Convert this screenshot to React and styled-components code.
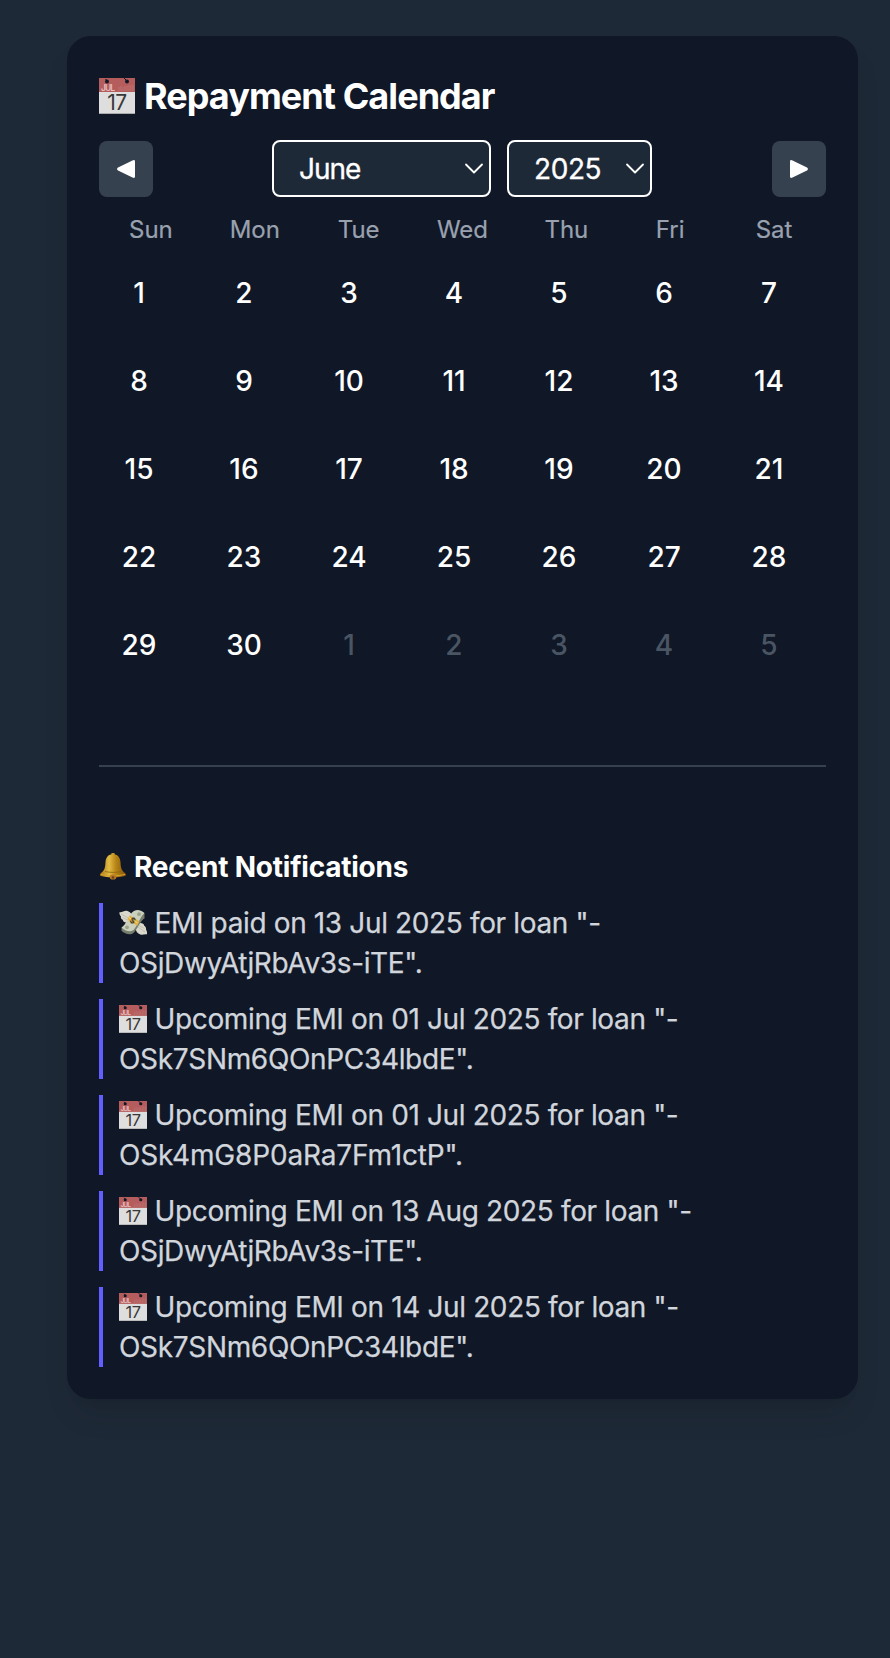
import React from "react";
import styled, { createGlobalStyle } from "styled-components";

const GlobalStyle = createGlobalStyle`
  *, *::before, *::after { box-sizing: border-box; }
  body {
    margin: 0;
    background: #1e2937;
    color: #fff;
    font-family: Inter, "Liberation Sans", sans-serif;
    font-size: 28px;
    line-height: 40px;
    -webkit-font-smoothing: antialiased;
  }
`;

const Page = styled.main`
  min-height: 1658px;
  padding: 36px 32px 0 67px;
`;

const Card = styled.section`
  height: 1363px;
  padding: 32px;
  border-radius: 24px;
  background: #101726;
  box-shadow: 0 20px 30px -6px rgba(0, 0, 0, 0.1), 0 8px 12px -8px rgba(0, 0, 0, 0.1);
`;

const Title = styled.h2`
  display: flex;
  align-items: center;
  gap: 9px;
  height: 56px;
  margin: 0 0 16px;
  font-size: 36px;
  line-height: 56px;
  font-weight: 700;
  letter-spacing: -0.94px;
`;

const Controls = styled.div`
  display: flex;
  justify-content: space-between;
  align-items: center;
  height: 57px;
  margin-bottom: 17px;
`;

const NavButton = styled.button`
  display: grid;
  place-items: center;
  width: 54px;
  height: 56px;
  padding: 0;
  border: 0;
  border-radius: 8px;
  background: #364150;
  color: #fff;
`;

const Selects = styled.div`
  display: flex;
  gap: 16px;
  margin-right: 1px;
`;

const SelectBox = styled.div`
  display: flex;
  justify-content: space-between;
  align-items: center;
  width: ${(p) => p.$width}px;
  height: 57px;
  padding: 0 5px 0 25px;
  border: 2px solid #fff;
  border-radius: 8px;
  background: #1e2937;
  letter-spacing: ${(p) => p.$spacing || 0}px;
  -webkit-text-stroke: 0.3px currentColor;
`;

const Weekdays = styled.div`
  display: grid;
  grid-template-columns: repeat(7, 1fr);
  margin-bottom: 7px;
  color: #99a1af;
  font-size: 24px;
  line-height: 32px;
  text-align: center;
  -webkit-text-stroke: 0.2px currentColor;
`;

const Days = styled.div`
  display: grid;
  grid-template-columns: repeat(7, 1fr);
  gap: 8px;
`;

const Day = styled.div`
  width: 80px;
  height: 80px;
  padding-top: 20px;
  text-align: center;
  font-weight: 500;
  color: ${(p) => (p.$muted ? "#4a5564" : "#fff")};
`;

const Divider = styled.hr`
  height: 2px;
  margin: 80px 0 80px;
  border: 0;
  background: #364150;
`;

const Subtitle = styled.h3`
  display: flex;
  align-items: center;
  gap: 7px;
  height: 40px;
  margin: 0 0 16px;
  font-size: 28px;
  font-weight: 650;
  letter-spacing: -0.22px;
`;

const List = styled.ul`
  display: flex;
  flex-direction: column;
  gap: 16px;
  margin: 0;
  padding: 0;
  list-style: none;
`;

const Item = styled.li`
  height: 80px;
  padding-left: 16px;
  border-left: 4px solid #615fff;
  color: #d1d5dc;
  -webkit-text-stroke: 0.25px currentColor;
`;

const Line = styled.div`
  display: flex;
  align-items: center;
  gap: 7.5px;
  white-space: nowrap;
  letter-spacing: ${(p) => p.$spacing || "-0.36"}px;
`;

const CalendarIcon = ({ size }) => (
  <svg width={size} height={size} viewBox="0 0 36 36" style={{ flex: "none" }}>
    <rect width="36" height="36" fill="#dedede" />
    <rect width="36" height="14" fill="#b55d5d" />
    <path d="M0 35.5h36" stroke="#aaa" />
    <path d="M20 9v4M22 8v5M24 9v4M26 8v5M28 8v5M30 7v6M32 7v6M34 7v6" stroke="#c07878" strokeWidth=".7" />
    <path d="M6.500 1l1.500 2M25 0l3 3" stroke="#101726" strokeWidth="1" />
    <circle cx="8" cy="3.500" r="2" fill="#101726" />
    <circle cx="28" cy="3.500" r="2" fill="#101726" />
    <text x="2" y="12.800" fill="#e5bdbd" fontSize="8.500" fontWeight="600" textLength="13">JUL</text>
    <text x="18" y="32" textAnchor="middle" fill="#383838" fontSize="21" fontWeight="400" letterSpacing="-.5">17</text>
  </svg>
);

const BellIcon = () => (
  <svg width="28" height="28" viewBox="0 0 28 28" style={{ flex: "none" }}>
    <defs>
      <linearGradient id="bell" x1="0" x2="1">
        <stop offset="0" stopColor="#a87510" />
        <stop offset=".35" stopColor="#e3bc45" />
        <stop offset=".6" stopColor="#b98617" />
        <stop offset="1" stopColor="#805208" />
      </linearGradient>
    </defs>
    <g transform="translate(0 -1)">
      <circle cx="14" cy="2.500" r="1.800" fill="#c39522" />
      <path d="M14 2.200c-5 0-7.200 3.400-7.500 8-.3 6.800-1.500 8.500-5 11.200-.8.7-.7 2.200.4 2.600 6 1.800 18.200 1.800 24.200 0 1.100-.4 1.200-1.900.4-2.600-3.500-2.700-4.700-4.400-5-11.200-.3-4.600-2.500-8-7.500-8z" fill="url(#bell)" />
      <path d="M2 22.300c7 2 17 2 24 0" stroke="#d9a32b" fill="none" />
      <path d="M6 19.500c5 1.200 11 1.200 16 0" stroke="#8d620d" strokeWidth=".8" fill="none" />
      <ellipse cx="14" cy="25" rx="3.300" ry="2.600" fill="#b77925" />
      <circle cx="14" cy="25.500" r="1.300" fill="#71401a" />
    </g>
  </svg>
);

const MoneyIcon = () => (
  <svg width="28" height="28" viewBox="0 0 28 28" style={{ flex: "none" }}>
    <path d="M.5 3c2 1 5-2 8-1 3 .8 5 3.500 4.500 6.700L10 13C6 14.500 4 12.700 3.700 10.800 1.800 10 1.700 8.500 2 7.500.8 6.500.2 4.500.5 3z" fill="#d9d8cb" />
    <path d="M27.800 25.500c-1.800-.8-3.800 1-6.500.1-3-1.200-4.800-3.700-4.500-6.400l3-5c3-.6 5.200.5 5.400 2.500 1.600.8 2.200 2.800 1.800 4 1 1 1.400 3.300.8 4.800z" fill="#d9d8cb" />
    <path d="M2 5l7 4M3.500 8.500l5 2.500M19 18l7 5M20 16.500l5.500 3" stroke="#b5b4a6" strokeWidth=".7" />
    <path d="M13 5.500C16 1.500 21 .7 25.500 4.500v5C22 11 19.500 18 15 23.500c-3.500 3.500-9 1.500-12.500-1.800v-3C7 17 9 9.500 13 5.500z" fill="#777d6c" />
    <path d="M13 3.500C16 0 21 0 25.500 4c-4 3-6.500 12-11 17-3.500 2.800-8.500 1-12-2.500C7 16 9 8 13 3.500z" fill="#cbd0bd" />
    <circle cx="20" cy="5.200" r="1.900" fill="#9aa48d" />
    <circle cx="8" cy="18.300" r="1.900" fill="#9aa48d" />
    <path d="M10.700 6.500L20.500 12.200l-2.200 4.500-10-6.200z" fill="#deb044" />
    <path d="M10 8.500l8.500 5.500" stroke="#f5d985" />
    <text x="13.500" y="14.500" textAnchor="middle" fontSize="8" fontWeight="700" fill="#493b20" transform="rotate(30 13.500 11.500)">$</text>
  </svg>
);

const Chevron = () => (
  <svg width="20" height="14" viewBox="0 0 20 14" fill="none">
    <path d="M2 2.500l8 8 8-8" stroke="#fff" strokeWidth="1.800" strokeLinecap="round" strokeLinejoin="round" />
  </svg>
);

const Triangle = ({ right }) => (
  <svg width="18" height="20" viewBox="0 0 18 20" fill="currentColor">
    <path
      transform={right ? "rotate(180 9 10)" : undefined}
      d="M1 8.600L15.500 1.400Q18 .400 18 2.400V17.600Q18 19.600 15.500 18.600L1 11.400Q-.9 10 1 8.600z"
    />
  </svg>
);

const weekdays = ["Sun", "Mon", "Tue", "Wed", "Thu", "Fri", "Sat"];
const days = Array.from({ length: 35 }, (_, i) => ({ n: i < 30 ? i + 1 : i - 29, muted: i >= 30 }));
const notifications = [
  { paid: true, text: "EMI paid on 13 Jul 2025 for loan \"-", id: "OSjDwyAtjRbAv3s-iTE\"." },
  { text: "Upcoming EMI on 01 Jul 2025 for loan \"-", id: "OSk7SNm6QOnPC34lbdE\".", idSpacing: "-0.33" },
  { text: "Upcoming EMI on 01 Jul 2025 for loan \"-", id: "OSk4mG8P0aRa7Fm1ctP\".", idSpacing: "-0.16" },
  { text: "Upcoming EMI on 13 Aug 2025 for loan \"-", id: "OSjDwyAtjRbAv3s-iTE\"." },
  { text: "Upcoming EMI on 14 Jul 2025 for loan \"-", id: "OSk7SNm6QOnPC34lbdE\".", idSpacing: "-0.33" },
];

export default function App() {
  return (
    <Page>
      <GlobalStyle />
      <Card>
        <Title><CalendarIcon size={36} />Repayment Calendar</Title>
        <Controls>
          <NavButton aria-label="Previous month"><Triangle /></NavButton>
          <Selects>
            <SelectBox $width={219} $spacing={-1}>June<Chevron /></SelectBox>
            <SelectBox $width={145} $spacing={-0.4}>2025<Chevron /></SelectBox>
          </Selects>
          <NavButton aria-label="Next month"><Triangle right /></NavButton>
        </Controls>
        <Weekdays>{weekdays.map((d) => <span key={d}>{d}</span>)}</Weekdays>
        <Days>{days.map((d, i) => <Day key={i} $muted={d.muted}>{d.n}</Day>)}</Days>
        <Divider />
        <Subtitle><BellIcon />Recent Notifications</Subtitle>
        <List>
          {notifications.map((n, i) => (
            <Item key={i}>
              <Line>{n.paid ? <MoneyIcon /> : <CalendarIcon size={28} />}<span>{n.text}</span></Line>
              <Line $spacing={n.idSpacing}>{n.id}</Line>
            </Item>
          ))}
        </List>
      </Card>
    </Page>
  );
}
